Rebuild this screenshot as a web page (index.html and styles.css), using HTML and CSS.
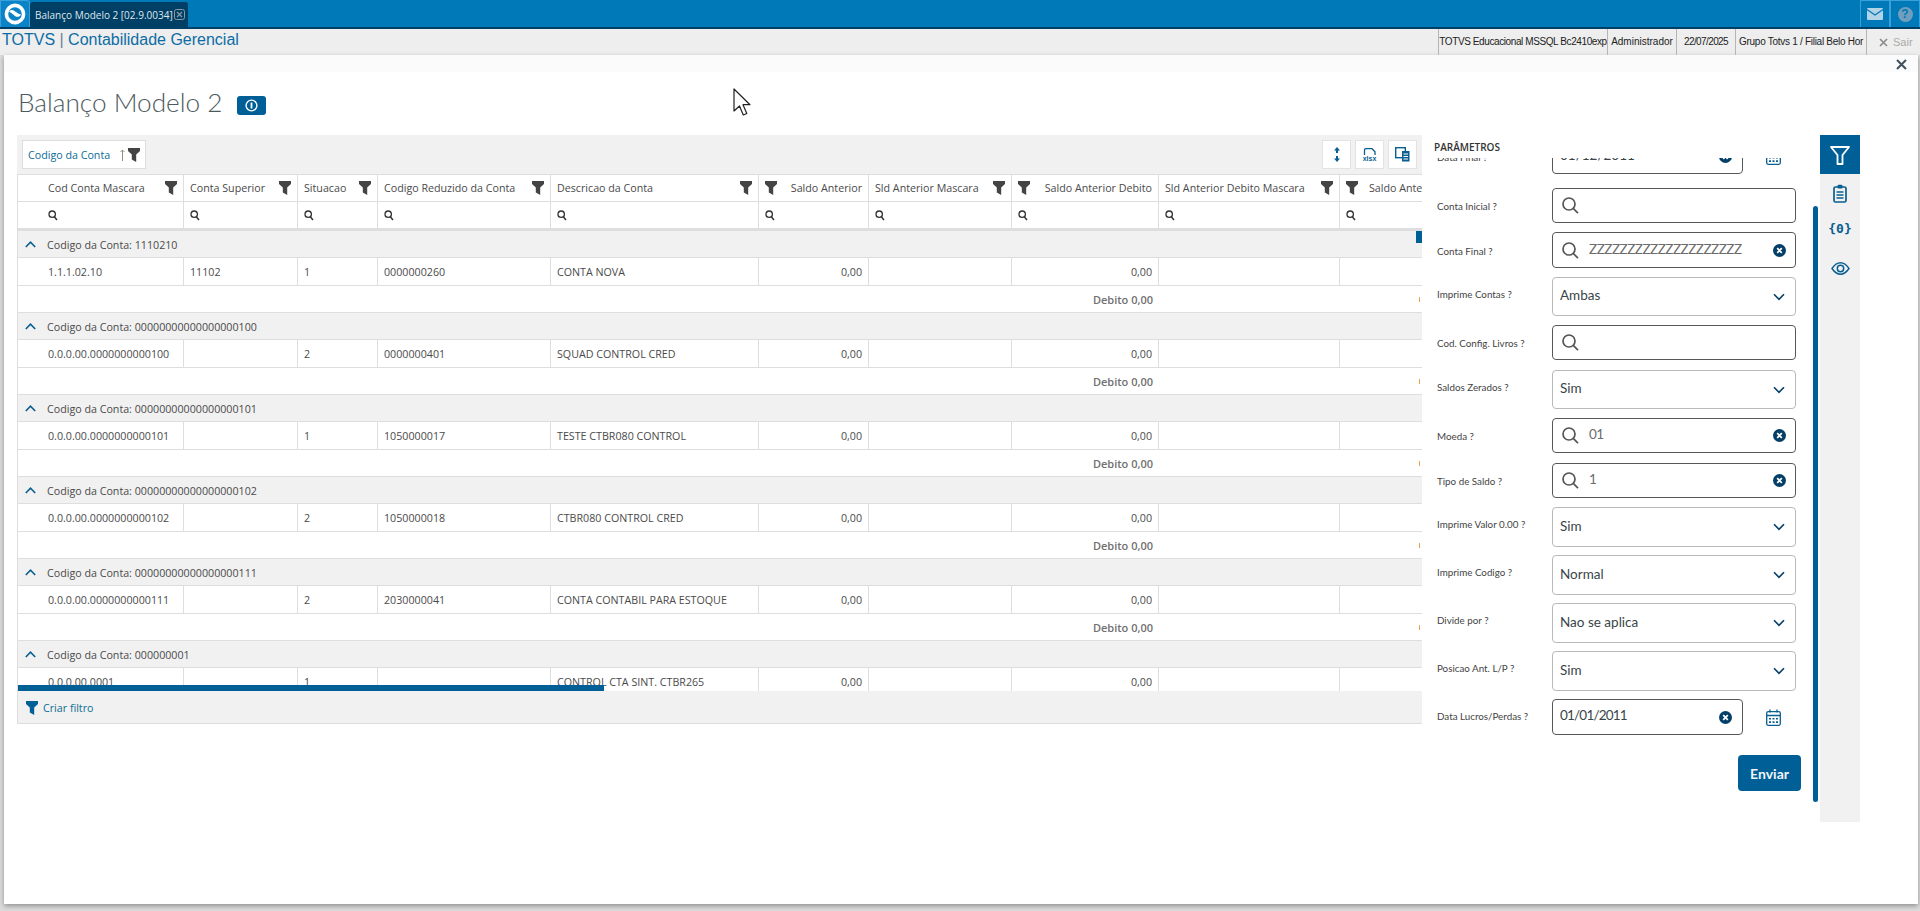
FILE: index.html
```html
<!DOCTYPE html>
<html lang="pt-BR">
<head>
<meta charset="utf-8">
<title>Balanço Modelo 2</title>
<link rel="stylesheet" href="styles.css">
</head>
<body>
<svg width="0" height="0" class="defs">
  <defs>
    <symbol id="funnel" viewBox="0 0 12 14"><path d="M0 0h12v3L8.2 6.6V14L3.8 11.5V6.6L0 3z"/></symbol>
    <symbol id="mini-search" viewBox="0 0 10 11"><circle cx="4.2" cy="4.2" r="3.2" fill="none" stroke="currentColor" stroke-width="1.3"/><path d="M6.3 6.8 9 10" fill="none" stroke="currentColor" stroke-width="1.5"/></symbol>
    <symbol id="search" viewBox="0 0 17 17"><circle cx="7" cy="7" r="6" fill="none" stroke="currentColor" stroke-width="1.7"/><path d="M11.2 11.4 16 16.2" fill="none" stroke="currentColor" stroke-width="1.7"/></symbol>
    <symbol id="clear" viewBox="0 0 13 13"><circle cx="6.5" cy="6.5" r="6.5" fill="#043f68"/><path d="M4.2 4.2l4.6 4.6M8.8 4.2 4.2 8.8" stroke="#fff" stroke-width="1.8"/></symbol>
    <symbol id="chev" viewBox="0 0 12 8"><path d="M1 1.2 6 6.4l5-5.2" fill="none" stroke="#043f68" stroke-width="1.6"/></symbol>
    <symbol id="chev-up" viewBox="0 0 11 7"><path d="M.8 6 5.5 1.2 10.2 6" fill="none" stroke="#0a5f90" stroke-width="1.6"/></symbol>
    <symbol id="cal" viewBox="0 0 15 17"><rect x=".7" y="2.7" width="13.6" height="13.6" rx="1.5" fill="none" stroke="#0a5f90" stroke-width="1.3"/><path d="M.7 6.5h13.6M4 .5v3M11 .5v3" stroke="#0a5f90" stroke-width="1.3" fill="none"/><path d="M3 9h2v1.6H3zM6.5 9h2v1.6h-2zM10 9h2v1.6h-2zM3 12.3h2v1.6H3zM6.5 12.3h2v1.6h-2zM10 12.3h2v1.6h-2z" fill="#0a5f90"/></symbol>
  </defs>
</svg>

<header class="topbar">
  <div class="logo">
    <svg width="22" height="22" viewBox="0 0 22 22"><circle cx="11" cy="11" r="8.6" fill="none" stroke="#fff" stroke-width="3.6"/><path d="M5 8.5c3-3 5-1 7 .6 2 1.5 3.600 2.400 5 2.400-1 2.500-4 3-6 1.500-2-1.500-4-3.500-6-4.500z" fill="#fff"/></svg>
  </div>
  <div class="tab">
    <span>Balanço Modelo 2 [02.9.0034]</span>
    <svg width="11" height="11" viewBox="0 0 11 11"><rect x=".5" y=".5" width="10" height="10" rx="2" fill="none" stroke="#8c9aa5"/><path d="M3 3l5 5M8 3 3 8" stroke="#8c9aa5" stroke-width="1.2"/></svg>
  </div>
  <div class="top-actions">
    <button class="top-btn"><svg width="16" height="12" viewBox="0 0 16 12"><rect width="16" height="12" rx="1" fill="#b3d3e6"/><path d="M0 1.500 8 7l8-5.500" fill="none" stroke="#0079b8" stroke-width="1.200"/></svg></button>
    <button class="top-btn help"><span>?</span></button>
  </div>
</header>

<div class="titlebar">
  <div class="app-name">TOTVS <span class="pipe">|</span> Contabilidade Gerencial</div>
  <ul class="session">
    <li class="s1">TOTVS Educacional MSSQL Bc2410exp</li>
    <li class="s2">Administrador</li>
    <li class="s3">22/07/2025</li>
    <li class="s4">Grupo Totvs 1 / Filial Belo Hor</li>
    <li class="s5"><svg width="9" height="9" viewBox="0 0 9 9"><path d="M1 1l7 7M8 1 1 8" stroke="#8a8a8a" stroke-width="1.600"/></svg><span>Sair</span></li>
  </ul>
</div>

<main class="modal">
  <div class="modal-strip">
    <svg class="modal-close" width="11" height="11" viewBox="0 0 11 11"><path d="M1 1l9 9M10 1 1 10" stroke="#40505c" stroke-width="2"/></svg>
  </div>
  <div class="heading">
    <h1>Balanço Modelo 2</h1>
    <button class="info"><svg width="13" height="13" viewBox="0 0 13 13"><circle cx="6.500" cy="6.500" r="5.400" fill="none" stroke="#fff" stroke-width="1.400"/><path d="M6.500 3.500v6" stroke="#fff" stroke-width="1.800"/></svg></button>
  </div>

  <div class="content">
    <section class="report">
      <div class="toolbar">
        <div class="chip">
          <span>Codigo da Conta</span>
          <svg width="5" height="12" viewBox="0 0 5 12"><path d="M2.500 12V1M.5 3l2-2 2 2" fill="none" stroke="#9a8f7f" stroke-width="1"/></svg>
          <svg class="fn" width="12" height="14"><use href="#funnel"/></svg>
        </div>
        <div class="tools">
          <button class="tool"><svg width="8" height="15" viewBox="0 0 8 15"><path d="M4 0 7 3.500H5V6H3V3.500H1zM4 15 7 11.500H5V9H3v2.500H1z" fill="#0a5f90"/></svg></button>
          <button class="tool xlsx"><svg width="14" height="7" viewBox="0 0 14 7"><path d="M1.500 7V2.200Q1.500 .7 3 .7h6l3 3V7" fill="none" stroke="#0a5f90" stroke-width="1.300"/></svg><span>xlsx</span></button>
          <button class="tool"><svg width="15" height="15" viewBox="0 0 15 15"><rect x=".7" y=".7" width="9.600" height="10" fill="none" stroke="#0a5f90" stroke-width="1.400"/><rect x="7" y="4" width="7.500" height="10.500" fill="#0a5f90"/><path d="M8.500 7h4.500M8.500 9.500h4.500M8.500 12h4.500" stroke="#fff"/></svg></button>
        </div>
      </div>

      <div class="grid-wrap">
        <table class="grid">
          <colgroup>
            <col class="c1"><col class="c2"><col class="c3"><col class="c4"><col class="c5"><col class="c6"><col class="c7"><col class="c8"><col class="c9"><col class="c10">
          </colgroup>
          <thead>
            <tr class="head">
              <th class="first"><div class="th"><span>Cod Conta Mascara</span><svg class="fn" width="12" height="14"><use href="#funnel"/></svg></div></th>
              <th><div class="th"><span>Conta Superior</span><svg class="fn" width="12" height="14"><use href="#funnel"/></svg></div></th>
              <th><div class="th"><span>Situacao</span><svg class="fn" width="12" height="14"><use href="#funnel"/></svg></div></th>
              <th><div class="th"><span>Codigo Reduzido da Conta</span><svg class="fn" width="12" height="14"><use href="#funnel"/></svg></div></th>
              <th><div class="th"><span>Descricao da Conta</span><svg class="fn" width="12" height="14"><use href="#funnel"/></svg></div></th>
              <th><div class="th"><svg class="fn" width="12" height="14"><use href="#funnel"/></svg><span>Saldo Anterior</span></div></th>
              <th><div class="th"><span>Sld Anterior Mascara</span><svg class="fn" width="12" height="14"><use href="#funnel"/></svg></div></th>
              <th><div class="th"><svg class="fn" width="12" height="14"><use href="#funnel"/></svg><span>Saldo Anterior Debito</span></div></th>
              <th><div class="th"><span>Sld Anterior Debito Mascara</span><svg class="fn" width="12" height="14"><use href="#funnel"/></svg></div></th>
              <th><div class="th start"><svg class="fn" width="12" height="14"><use href="#funnel"/></svg><span>Saldo Anterior Credito</span></div></th>
            </tr>
            <tr class="filters">
              <th class="first"><svg width="10" height="11"><use href="#mini-search"/></svg></th>
              <th><svg width="10" height="11"><use href="#mini-search"/></svg></th>
              <th><svg width="10" height="11"><use href="#mini-search"/></svg></th>
              <th><svg width="10" height="11"><use href="#mini-search"/></svg></th>
              <th><svg width="10" height="11"><use href="#mini-search"/></svg></th>
              <th><svg width="10" height="11"><use href="#mini-search"/></svg></th>
              <th><svg width="10" height="11"><use href="#mini-search"/></svg></th>
              <th><svg width="10" height="11"><use href="#mini-search"/></svg></th>
              <th><svg width="10" height="11"><use href="#mini-search"/></svg></th>
              <th><svg width="10" height="11"><use href="#mini-search"/></svg></th>
            </tr>
          </thead>
          <tbody>
            <tr class="group"><td colspan="10"><svg width="11" height="7"><use href="#chev-up"/></svg><span>Codigo da Conta: 1110210</span></td></tr>
            <tr class="row-data"><td class="first">1.1.1.02.10</td><td>11102</td><td>1</td><td>0000000260</td><td>CONTA NOVA</td><td class="num">0,00</td><td></td><td class="num">0,00</td><td></td><td></td></tr>
            <tr class="total"><td colspan="8">Debito 0,00</td><td colspan="2" class="rest"><span></span></td></tr>

            <tr class="group"><td colspan="10"><svg width="11" height="7"><use href="#chev-up"/></svg><span>Codigo da Conta: 00000000000000000100</span></td></tr>
            <tr class="row-data"><td class="first">0.0.0.00.0000000000100</td><td></td><td>2</td><td>0000000401</td><td>SQUAD CONTROL CRED</td><td class="num">0,00</td><td></td><td class="num">0,00</td><td></td><td></td></tr>
            <tr class="total"><td colspan="8">Debito 0,00</td><td colspan="2" class="rest"><span></span></td></tr>

            <tr class="group"><td colspan="10"><svg width="11" height="7"><use href="#chev-up"/></svg><span>Codigo da Conta: 00000000000000000101</span></td></tr>
            <tr class="row-data"><td class="first">0.0.0.00.0000000000101</td><td></td><td>1</td><td>1050000017</td><td>TESTE CTBR080 CONTROL</td><td class="num">0,00</td><td></td><td class="num">0,00</td><td></td><td></td></tr>
            <tr class="total"><td colspan="8">Debito 0,00</td><td colspan="2" class="rest"><span></span></td></tr>

            <tr class="group"><td colspan="10"><svg width="11" height="7"><use href="#chev-up"/></svg><span>Codigo da Conta: 00000000000000000102</span></td></tr>
            <tr class="row-data"><td class="first">0.0.0.00.0000000000102</td><td></td><td>2</td><td>1050000018</td><td>CTBR080 CONTROL CRED</td><td class="num">0,00</td><td></td><td class="num">0,00</td><td></td><td></td></tr>
            <tr class="total"><td colspan="8">Debito 0,00</td><td colspan="2" class="rest"><span></span></td></tr>

            <tr class="group"><td colspan="10"><svg width="11" height="7"><use href="#chev-up"/></svg><span>Codigo da Conta: 00000000000000000111</span></td></tr>
            <tr class="row-data"><td class="first">0.0.0.00.0000000000111</td><td></td><td>2</td><td>2030000041</td><td>CONTA CONTABIL PARA ESTOQUE</td><td class="num">0,00</td><td></td><td class="num">0,00</td><td></td><td></td></tr>
            <tr class="total"><td colspan="8">Debito 0,00</td><td colspan="2" class="rest"><span></span></td></tr>

            <tr class="group"><td colspan="10"><svg width="11" height="7"><use href="#chev-up"/></svg><span>Codigo da Conta: 000000001</span></td></tr>
            <tr class="row-data"><td class="first">0.0.0.00.0001</td><td></td><td>1</td><td></td><td>CONTROL CTA SINT. CTBR265</td><td class="num">0,00</td><td></td><td class="num">0,00</td><td></td><td></td></tr>
          </tbody>
        </table>
        <div class="thumb-v"></div>
        <div class="thumb-h"></div>
      </div>

      <div class="grid-foot">
        <svg width="12" height="14" class="fn-blue"><use href="#funnel"/></svg>
        <span>Criar filtro</span>
      </div>
    </section>

    <aside class="params">
      <h2>PARÂMETROS</h2>
      <div class="form">
        <div class="field first-field"><label>Data Final ?</label><div class="date-wrap"><div class="input dark date"><span class="val">01/12/2011</span><svg class="clr" width="13" height="13"><use href="#clear"/></svg></div><svg class="calendar" width="15" height="17"><use href="#cal"/></svg></div></div>

        <div class="field lookup"><label>Conta Inicial ?</label><div class="input dark"><svg class="sr" width="17" height="17"><use href="#search"/></svg></div></div>
        <div class="field lookup h36"><label>Conta Final ?</label><div class="input dark"><svg class="sr" width="17" height="17"><use href="#search"/></svg><span class="val muted">ZZZZZZZZZZZZZZZZZZZZ</span><svg class="clr" width="13" height="13"><use href="#clear"/></svg></div></div>
        <div class="field select"><label>Imprime Contas ?</label><div class="input light"><span class="val">Ambas</span><svg class="chv" width="12" height="8"><use href="#chev"/></svg></div></div>
        <div class="field lookup wide"><label>Cod. Config. Livros ?</label><div class="input dark"><svg class="sr" width="17" height="17"><use href="#search"/></svg></div></div>
        <div class="field select"><label>Saldos Zerados ?</label><div class="input light"><span class="val">Sim</span><svg class="chv" width="12" height="8"><use href="#chev"/></svg></div></div>
        <div class="field lookup wide"><label>Moeda ?</label><div class="input dark"><svg class="sr" width="17" height="17"><use href="#search"/></svg><span class="val muted">01</span><svg class="clr" width="13" height="13"><use href="#clear"/></svg></div></div>
        <div class="field lookup"><label>Tipo de Saldo ?</label><div class="input dark"><svg class="sr" width="17" height="17"><use href="#search"/></svg><span class="val muted">1</span><svg class="clr" width="13" height="13"><use href="#clear"/></svg></div></div>
        <div class="field select tall"><label>Imprime Valor 0.00 ?</label><div class="input light"><span class="val">Sim</span><svg class="chv" width="12" height="8"><use href="#chev"/></svg></div></div>
        <div class="field select tall"><label>Imprime Codigo ?</label><div class="input light"><span class="val">Normal</span><svg class="chv" width="12" height="8"><use href="#chev"/></svg></div></div>
        <div class="field select tall"><label>Divide por ?</label><div class="input light"><span class="val">Nao se aplica</span><svg class="chv" width="12" height="8"><use href="#chev"/></svg></div></div>
        <div class="field select tall"><label>Posicao Ant. L/P ?</label><div class="input light"><span class="val">Sim</span><svg class="chv" width="12" height="8"><use href="#chev"/></svg></div></div>
        <div class="field last-field"><label>Data Lucros/Perdas ?</label><div class="date-wrap"><div class="input dark date"><span class="val">01/01/2011</span><svg class="clr" width="13" height="13"><use href="#clear"/></svg></div><svg class="calendar" width="15" height="17"><use href="#cal"/></svg></div></div>

        <div class="actions"><button class="send">Enviar</button></div>
      </div>
      <div class="panel-scroll"></div>
    </aside>

    <nav class="side-tabs">
      <a class="side-tab active"><svg width="22" height="22" viewBox="0 0 22 22"><path d="M2 3h18l-6.500 8v9h-5v-9z" fill="none" stroke="#fff" stroke-width="1.800" stroke-linejoin="round"/></svg></a>
      <a class="side-tab"><svg width="14" height="19" viewBox="0 0 14 19"><rect x="1" y="3" width="12" height="15" rx="1.500" fill="none" stroke="#0a5f90" stroke-width="1.700"/><rect x="4.500" y=".8" width="5" height="3.600" rx="1" fill="#0a5f90"/><path d="M3.500 8h7M3.500 11h7M3.500 14h7" stroke="#0a5f90" stroke-width="1.300"/></svg></a>
      <a class="side-tab code">{0}</a>
      <a class="side-tab eye"><svg width="19" height="13" viewBox="0 0 19 13"><path d="M1 6.500C4 2 7 .8 9.500 .8S15 2 18 6.500C15 11 12 12.200 9.500 12.200S4 11 1 6.500z" fill="none" stroke="#0a5f90" stroke-width="1.400"/><circle cx="9.500" cy="6.500" r="3.200" fill="none" stroke="#0a5f90" stroke-width="1.500"/></svg></a>
    </nav>
  </div>
</main>

<svg class="cursor" width="20" height="29" viewBox="0 0 20 29"><path d="M1 1v22l5.500-5 3.800 9 3.500-1.500-3.800-8.800H17z" fill="#fff" stroke="#222" stroke-width="1.200" stroke-linejoin="round"/></svg>
</body>
</html>
```
FILE: styles.css
```css
* { box-sizing: border-box; }
html, body { margin: 0; padding: 0; }
body {
  width: 1920px;
  height: 911px;
  overflow: hidden;
  background: #dcdcdc;
  font-family: "Open Sans", sans-serif;
  color: #444;
  position: relative;
}
button { border: 0; padding: 0; background: none; font: inherit; }
.defs { position: absolute; }

/* top bar */
.topbar {
  height: 29px;
  background: #0079b8;
  border-bottom: 2px solid #003f66;
  display: flex;
  align-items: stretch;
}
.logo {
  width: 30px;
  background: #0a84c6;
  border: 1px solid #3aa0dc;
  border-bottom: 0;
  border-radius: 0 3px 0 0;
  display: flex;
  align-items: center;
  justify-content: center;
}
.tab {
  width: 158px;
  margin-top: 2px;
  background: #003f66;
  border-radius: 3px 3px 0 0;
  display: flex;
  align-items: center;
  gap: 4px;
  padding-left: 5px;
  color: #dfe7ec;
  font-size: 10px;
  white-space: nowrap;
}
.tab span { width: 135px; }
.top-actions { margin-left: auto; display: flex; }
.top-btn {
  width: 30px;
  border: 1px solid #3aa0dc;
  border-bottom: 0;
  display: flex;
  align-items: center;
  justify-content: center;
}
.help span {
  width: 15px;
  height: 15px;
  border-radius: 50%;
  background: #6f9fbd;
  color: #0079b8;
  font: bold 12px/15px "Liberation Sans", sans-serif;
}

/* title bar */
.titlebar {
  height: 26px;
  background: #eeeeee;
  display: flex;
  justify-content: space-between;
  font-family: "Liberation Sans", sans-serif;
}
.app-name { font-size: 16px; line-height: 21px; color: #0c6ca5; padding-left: 2px; }
.pipe { color: #6d7f9a; }
.session {
  list-style: none;
  margin: 0;
  padding: 0;
  display: flex;
  font-size: 10px;
  color: #222;
  line-height: 26px;
}
.session li { border-left: 1px solid #b5b5b5; text-align: center; white-space: nowrap; }
.s1 { width: 169px; letter-spacing: -.4px; }
.s2 { width: 69px; }
.s3 { width: 59px; letter-spacing: -.6px; }
.s4 { width: 131px; letter-spacing: -.28px; }
.s5 { width: 54px; color: #aaa; display: flex; align-items: center; gap: 5px; padding-left: 12px; font-size: 11px; }

/* modal */
.modal {
  margin: 0 2px 0 4px;
  height: 849px;
  background: #fff;
  box-shadow: 0 2px 5px rgba(0, 0, 0, .35);
}
.modal-strip {
  height: 17px;
  background: #fbfbfb;
  position: relative;
}
.modal-close { position: absolute; right: 11px; top: 4px; }
.heading {
  height: 63px;
  padding: 0 0 4px 14px;
  display: flex;
  align-items: center;
  gap: 15px;
}
h1 {
  margin: 0;
  font-family: Lato, sans-serif;
  font-weight: 300;
  font-size: 26.2px;
  color: #4d5b60;
  white-space: nowrap;
}
.info {
  width: 29px;
  height: 19px;
  background: #005f96;
  border-radius: 3px;
  display: flex;
  align-items: center;
  justify-content: center;
  margin-top: 8px;
}

.content { display: flex; height: 687px; padding-left: 13px; }

/* report */
.report { width: 1405px; flex: none; height: 589px; }
.toolbar {
  height: 39px;
  background: #f1f1f1;
  padding: 5px;
  display: flex;
  justify-content: space-between;
}
.chip {
  width: 124px;
  background: #fff;
  border: 1px solid #dedede;
  display: flex;
  align-items: center;
  padding-left: 5px;
  font-size: 10.7px;
  color: #0c6c94;
  white-space: nowrap;
}
.chip span { width: 92px; }
.chip .fn { margin-left: 3px; }
.fn { fill: #444; flex: none; }
.tools { display: flex; gap: 4px; }
.tool {
  width: 29px;
  height: 29px;
  background: #fff;
  border: 1px solid #e3e3e3;
  display: flex;
  align-items: center;
  justify-content: center;
}
.xlsx { flex-direction: column; gap: 0; color: #0a5f90; font: bold 7px/7px "Liberation Sans", sans-serif; }

.grid-wrap {
  height: 517px;
  overflow: hidden;
  position: relative;
  border-top: 1px solid #dedede;
  border-left: 1px solid #dedede;
}
.grid {
  table-layout: fixed;
  width: 1522px;
  border-collapse: separate;
  border-spacing: 0;
  font-size: 10.7px;
  color: #4a4a4a;
}
.c1 { width: 166px; }
.c2 { width: 114px; }
.c3 { width: 80px; }
.c4 { width: 173px; }
.c5 { width: 208px; }
.c6 { width: 110px; }
.c7 { width: 143px; }
.c8 { width: 147px; }
.c9 { width: 181px; }
.c10 { width: 200px; }
.grid th, .grid td {
  padding: 0 6px;
  font-weight: 400;
  text-align: left;
  white-space: nowrap;
  overflow: hidden;
  border-right: 1px solid #dedede;
  border-bottom: 1px solid #dedede;
}
.grid .first { padding-left: 30px; }
.head { height: 27px; }
.th { display: flex; justify-content: space-between; align-items: center; }
.th.start { justify-content: flex-start; gap: 11px; }
.filters { height: 29px; }
.filters th { border-bottom-width: 3px; vertical-align: middle; line-height: 0; color: #333; }
.group { height: 27px; }
.grid .group td { background: #f1f1f1; padding: 1px 0 0 7px; border-right: 0; }
.group svg { margin-right: 11px; vertical-align: 1px; }
.row-data { height: 28px; }
.grid .num { text-align: right; }
.total { height: 27px; }
.grid .total td { border-right: 0; text-align: right; font-weight: 600; color: #707070; font-size: 11px; }
.grid .total .rest { text-align: left; padding: 0 0 0 260px; line-height: 0; }
.rest span { display: inline-block; width: 1px; height: 5px; background: #e8a04c; }
.thumb-v {
  position: absolute;
  right: 0;
  top: 56px;
  width: 6px;
  height: 12px;
  background: #005f96;
}
.thumb-h {
  position: absolute;
  left: 0;
  bottom: 0;
  width: 586px;
  height: 6px;
  background: #005f96;
}
.grid-foot {
  height: 33px;
  background: #f1f1f1;
  border-left: 1px solid #dedede;
  border-bottom: 1px solid #dedede;
  display: flex;
  align-items: center;
  gap: 5px;
  padding: 1px 0 0 8px;
  font-size: 10.7px;
  color: #0c6c94;
}
.fn-blue { fill: #005f96; }

/* parameters */
.params { width: 398px; flex: none; position: relative; padding-left: 12px; }
.params h2 {
  margin: 0;
  height: 23px;
  line-height: 24px;
  font-size: 10px;
  font-weight: 600;
  color: #333;
}
.form {
  height: 644px;
  overflow: hidden;
  padding-left: 3px;
  font-family: Lato, sans-serif;
  width: 367px;
}
.field {
  display: grid;
  grid-template-columns: 115px 244px;
  align-items: center;
  height: 35px;
  margin-bottom: 9px;
}
.field label { font-size: 9.8px; color: #444; white-space: nowrap; }
.first-field { margin-top: -19px; margin-bottom: 14px; }
.lookup label { padding-top: 1px; }
.lookup.wide { margin-bottom: 10px; }
.lookup.h36 { height: 36px; }
.select { height: 39px; }
.select label { padding-bottom: 6px; }
.select.tall { height: 40px; margin-bottom: 8px; }
.last-field { height: 36px; margin-bottom: 20px; }
.last-field label { padding-bottom: 2px; }
.input {
  height: 100%;
  background: #fff;
  border-radius: 4px;
  display: flex;
  align-items: center;
  padding: 0 9px;
  font-size: 13.5px;
  color: #3a4548;
  position: relative;
}
.dark { border: 1px solid #55595c; }
.light { border: 1px solid #b9b9b9; padding-left: 7px; }
.val { margin-top: -3px; white-space: nowrap; }
.muted { color: #6b6b6b; margin-left: 10px; letter-spacing: -.5px; }
.sr { color: #555; flex: none; }
.clr { margin-left: auto; flex: none; }
.chv { margin-left: auto; flex: none; margin-right: 1px; }
.date-wrap { display: flex; align-items: center; height: 100%; }
.date { width: 191px; padding-left: 7px; }
.last-field .val { letter-spacing: -.8px; margin-top: -5px; }
.date .clr { margin-right: 1px; }
.calendar { margin-left: 23px; }
.actions { display: flex; justify-content: flex-end; }
.send {
  width: 63px;
  height: 36px;
  background: #005f96;
  color: #f0f5f8;
  border-radius: 4px;
  font-weight: 700;
  font-size: 14px;
  font-family: Lato, sans-serif;
}
.panel-scroll {
  position: absolute;
  left: 391px;
  top: 71px;
  width: 5px;
  height: 596px;
  background: #005f96;
  border-radius: 3px;
}

/* side tabs */
.side-tabs { width: 40px; flex: none; background: #f1f1f1; }
.side-tab {
  height: 38px;
  display: flex;
  align-items: center;
  justify-content: center;
}
.side-tab.active { height: 39px; background: #005f96; }
.code { font: bold 13px "DejaVu Sans Mono", monospace; color: #0a5f90; height: 32px; }
.side-tab.eye { height: 48px; }

.cursor { position: absolute; left: 733px; top: 88px; }
```
